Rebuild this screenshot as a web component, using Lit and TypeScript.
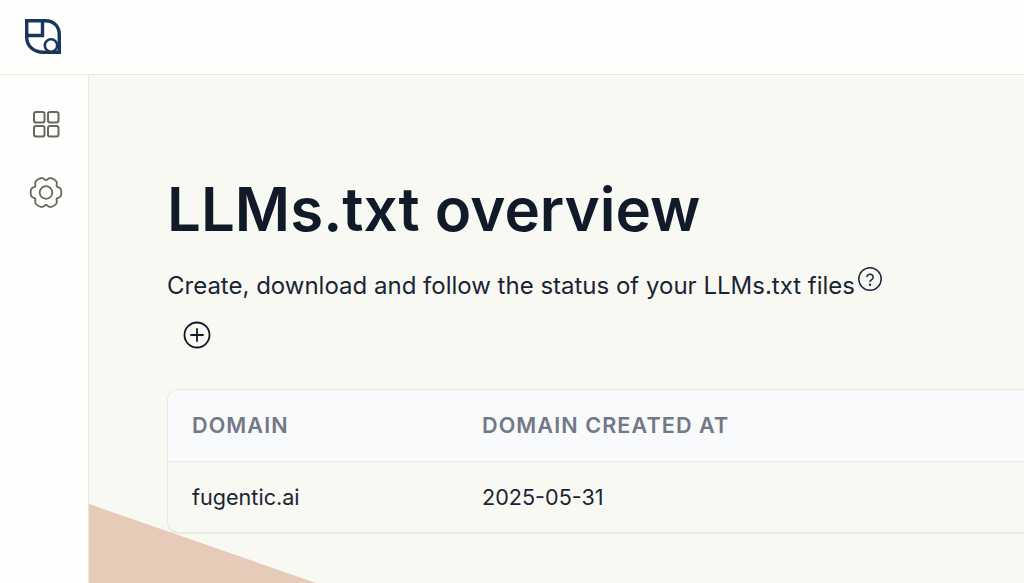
import { LitElement, html, css } from "lit";
import { customElement } from "lit/decorators.js";

const gearPath = (() => {
  const pts: string[] = [];
  for (let i = 0; i < 180; i++) {
    const t = (i / 180) * Math.PI * 2;
    const n = (1 - Math.cos(6 * t)) / 2;
    const r = 12.4 + 2.9 * (1 - n * n * n);
    pts.push(`${(18 + r * Math.cos(t)).toFixed(2)} ${(17.5 + r * Math.sin(t)).toFixed(2)}`);
  }
  return `M${pts.join("L")}Z`;
})();

@customElement("app-root")
export class AppRoot extends LitElement {
  static styles = css`
    :host { display: block; width: 1024px; height: 583px; overflow: hidden; position: relative; background: #fefefc; font-family: Inter, "Liberation Sans", sans-serif; color: #111827; }
    .top { height: 74px; border-bottom: 1px solid #e8e7e1; display: flex; align-items: center; padding-left: 24px; }
    .top svg { display: block; margin-top: -2px; }
    .body { display: flex; height: 508px; }
    .side { width: 89px; border-right: 1px solid #e8e7e1; display: flex; flex-direction: column; align-items: center; flex: none; padding: 33px 0 0 4px; gap: 35px; box-sizing: border-box; }
    .side svg { display: block; }
    .main { flex: 1; min-width: 0; background: #f9f9f4; padding: 100px 0 0 78px; overflow: hidden; }
    h1 { margin: 0; font-size: 60px; line-height: 68px; font-weight: 600; color: #101a28; white-space: nowrap; }
    .sub { margin-top: 27px; display: flex; font-size: 24px; line-height: 32px; white-space: nowrap; color: #1a2433; }
    .sub svg { display: block; margin: -4px 0 0 2px; }
    .add { margin: 18px 0 0 15px; height: 32px; }
    .add svg { display: block; }
    .table { margin-top: 37px; width: 1100px; border: 1px solid #e9e9e3; border-bottom-width: 2px; border-radius: 12px; overflow: hidden; }
    .row { display: grid; grid-template-columns: 290px 1fr; padding-left: 24px; align-items: center; box-sizing: border-box; }
    .head { height: 72px; padding-bottom: 2px; background: #f9fafc; border-bottom: 1px solid #e9e9e3; font-size: 21.6px; font-weight: 600; letter-spacing: 1.08px; color: #737885; }
    .data { height: 70px; font-size: 21.6px; color: #1a2433; }
    .tri { position: absolute; left: 89px; top: 504px; width: 227px; height: 79px; background: #e5cbb8; clip-path: polygon(0 0, 100% 100%, 0 100%); }
  `;
  render() {
    return html`
      <div class="top">
        <svg width="38" height="38" viewBox="0 0 38 38" fill="none" stroke="#1b365d" stroke-width="3.4">
          <path d="M2.7 3.7H21C30 3.7 35.3 9.5 35.3 18V35.3H19.5C9.5 35.3 2.7 29 2.7 20Z" stroke-linejoin="miter"/>
          <path d="M2.7 18.5H18.5V3.7"/>
          <circle cx="27" cy="28.5" r="6.2" fill="#fefefc" stroke-width="2.6"/>
        </svg>
      </div>
      <div class="body">
        <nav class="side">
          <svg width="32" height="32" viewBox="0 0 32 32" fill="none" stroke="#666662" stroke-width="2">
            <rect x="4" y="4" width="10.5" height="10.5" rx="2"/><rect x="18" y="4" width="10.5" height="10.5" rx="2"/>
            <rect x="4" y="18" width="10.5" height="10.5" rx="2"/><rect x="18" y="18" width="10.5" height="10.5" rx="2"/>
          </svg>
          <svg width="36" height="36" viewBox="0 0 36 36" fill="none" stroke="#666662" stroke-width="1.8" stroke-linejoin="round">
            <path d="${gearPath}"/>
            <circle cx="18" cy="17.5" r="6.3"/>
          </svg>
        </nav>
        <main class="main">
          <h1>LLMs.txt overview</h1>
          <div class="sub">Create, download and follow the status of your LLMs.txt files
            <svg width="26" height="26" viewBox="0 0 26 26" fill="none" stroke="#1b2a41" stroke-width="1.5">
              <circle cx="13" cy="13" r="11.2"/>
              <path d="M9.8 10.4a3.3 3.3 0 0 1 6.4 1c0 2.2-3.2 2.6-3.2 4.2" stroke-linecap="round"/>
              <circle cx="13" cy="18.8" r="0.5"/>
            </svg>
          </div>
          <div class="add">
            <svg width="30" height="30" viewBox="0 0 30 30" fill="none" stroke="#111827" stroke-width="1.8">
              <circle cx="15" cy="15" r="12.5"/><path d="M15 9V21M9 15H21" stroke-linecap="round"/>
            </svg>
          </div>
          <div class="table">
            <div class="row head"><span>DOMAIN</span><span>DOMAIN CREATED AT</span></div>
            <div class="row data"><span>fugentic.ai</span><span>2025-05-31</span></div>
          </div>
        </main>
      </div>
      <div class="tri"></div>
    `;
  }
}
